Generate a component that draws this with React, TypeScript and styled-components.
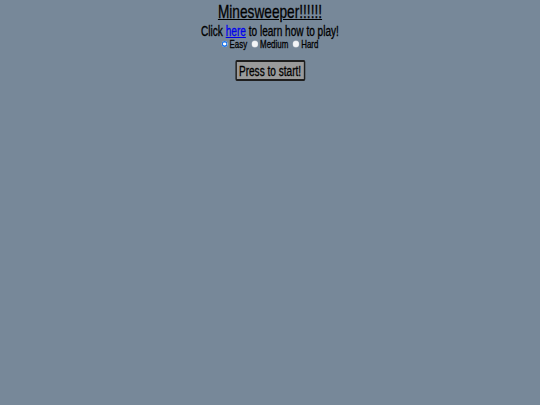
import * as React from 'react';
import styled, {createGlobalStyle} from 'styled-components'

const GlobalStyle = createGlobalStyle`
  html, body {
    margin: 0;
    padding: 0;
    background-color: #778899;
    min-height: 100%;
  }
  body {
    font-family: "Liberation Sans", Arial, sans-serif;
    color: #000;
  }
`

const Page = styled.div`
  min-height: 405px;
  padding-top: 1px;
  box-sizing: border-box;
`
// the reference uses a condensed face, so the whole block is squeezed horizontally
const Content = styled.div`
  display: flex;
  flex-direction: column;
  align-items: center;
  transform: scaleX(0.72);
  transform-origin: 50% 0;
  -webkit-text-stroke: 0.3px currentColor;
`
const Title = styled.h1`
  margin: 0;
  font-size: 19px;
  font-weight: normal;
  line-height: 22px;
  text-decoration: underline;
`
const Intro = styled.div`
  font-size: 14px;
  line-height: 16px;
  a {
    color: #0000ee;
  }
`
const Levels = styled.div`
  display: flex;
  align-items: center;
  gap: 7px;
  margin-top: -1px;
  font-size: 11px;
  line-height: 12px;
`
const Level = styled.label`
  display: flex;
  align-items: center;
  gap: 3px;
`
const Radio = styled.input`
  appearance: none;
  width: 8px;
  height: 6px;
  margin: 0;
  border-radius: 50%;
  background-color: #f4f6f8;
  box-shadow: 0 0 0 0.5px #c8ced6;
  &:checked {
    background-color: #ffffff;
    box-shadow: inset 0 0 0 1.6px #1a73e8;
  }
`
const StartButton = styled.button`
  margin-top: 10px;
  width: 97px;
  height: 21px;
  padding: 0;
  border: 2px solid #1e1e1e;
  border-radius: 2px;
  background-color: #9a9a9a;
  font-family: inherit;
  font-size: 14px;
  white-space: nowrap;
  color: #000;
  -webkit-text-stroke: 0.3px currentColor;
`

export default function App() {
    const [level, setLevel] = React.useState('easy')
    const levels = [
        {id: 'easy', label: 'Easy'},
        {id: 'medium', label: 'Medium'},
        {id: 'hard', label: 'Hard'},
    ]

    return (
        <>
            <GlobalStyle/>
            <Page>
                <Content>
                    <Title>Minesweeper!!!!!!</Title>
                    <Intro>Click <a href="#">here</a> to learn how to play!</Intro>
                    <Levels>
                        {levels.map(item =>
                            <Level key={item.id}>
                                <Radio type="radio" name="level" checked={level === item.id}
                                       onChange={() => setLevel(item.id)}/>
                                {item.label}
                            </Level>
                        )}
                    </Levels>
                    <StartButton>Press to start!</StartButton>
                </Content>
            </Page>
        </>
    )
}
